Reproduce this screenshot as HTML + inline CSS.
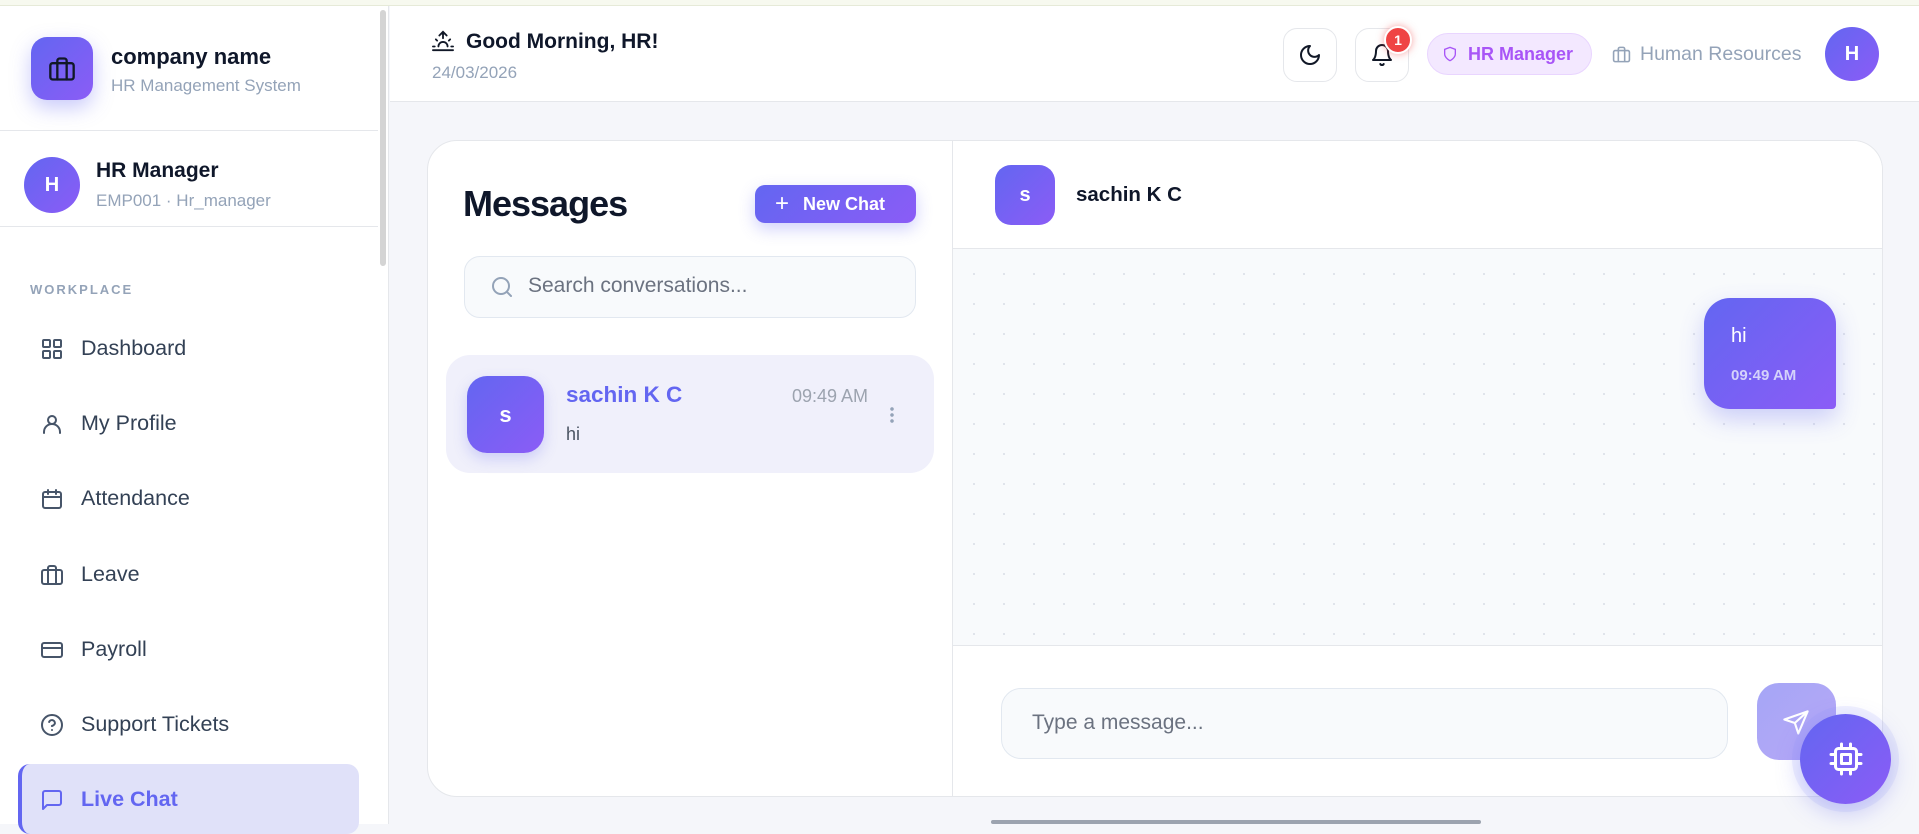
<!DOCTYPE html>
<html><head><meta charset="utf-8"><style>
*{box-sizing:border-box;margin:0;padding:0}
body{width:1919px;height:824px;overflow:hidden;font-family:"Liberation Sans",sans-serif;background:#f5f6fa;position:relative}
.abs{position:absolute}
.topline{left:0;top:0;width:1919px;height:6px;background:#f7f9ef;border-bottom:1px solid #e6ead8}
.side{left:0;top:6px;width:389px;height:818px;background:#fff;border-right:1px solid #e5e7eb}
.grad{background:linear-gradient(135deg,#6366f1,#8b5cf6)}
.nav{position:absolute;left:40px;font-size:21.5px;color:#334155;display:flex;align-items:center}
.nav svg{width:24px;height:24px;margin-right:17px;stroke:#475569;fill:none;stroke-width:2;stroke-linecap:round;stroke-linejoin:round}
.hdr{left:390px;top:6px;width:1529px;height:96px;background:#fff;border-bottom:1px solid #e5e7eb}
.ib{position:absolute;width:54px;height:54px;border:1px solid #e5e7eb;border-radius:14px;background:#fff;display:flex;align-items:center;justify-content:center}
.card{left:427px;top:140px;width:1456px;height:657px;background:#fff;border:1px solid #e5e7eb;border-radius:30px;overflow:hidden}
</style></head><body>
<div class="abs topline"></div>
<div class="abs side">
  <div class="abs grad" style="left:31px;top:31px;width:62px;height:63px;border-radius:16px;box-shadow:0 8px 20px rgba(99,102,241,.35);display:flex;align-items:center;justify-content:center">
    <svg width="28" height="28" viewBox="0 0 24 24" fill="none" stroke="#111827" stroke-width="2" stroke-linecap="round" stroke-linejoin="round"><rect x="2" y="7" width="20" height="14" rx="2"/><path d="M16 21V5a2 2 0 0 0-2-2h-4a2 2 0 0 0-2 2v16"/></svg>
  </div>
  <div class="abs" style="left:111px;top:38px;font-size:22px;font-weight:bold;color:#0f172a">company name</div>
  <div class="abs" style="left:111px;top:70px;font-size:17px;color:#94a3b8">HR Management System</div>
  <div class="abs" style="left:0;top:124px;width:378px;border-top:1px solid #e5e7eb"></div>
  <div class="abs grad" style="left:24px;top:151px;width:56px;height:56px;border-radius:50%;color:#fff;font-weight:bold;font-size:20px;display:flex;align-items:center;justify-content:center">H</div>
  <div class="abs" style="left:96px;top:153px;font-size:21px;font-weight:bold;color:#0f172a">HR Manager</div>
  <div class="abs" style="left:96px;top:185px;font-size:17px;color:#94a3b8">EMP001 · Hr_manager</div>
  <div class="abs" style="left:0;top:220px;width:378px;border-top:1px solid #e5e7eb"></div>
  <div class="abs" style="left:380px;top:4px;width:6px;height:256px;background:#d4d4d4;border-radius:3px"></div>
  <div class="abs" style="left:30px;top:276px;font-size:13px;font-weight:bold;color:#94a3b8;letter-spacing:2px">WORKPLACE</div>
  <div class="nav" style="top:330px"><svg viewBox="0 0 24 24"><rect x="3" y="3" width="7" height="7" rx="1"/><rect x="14" y="3" width="7" height="7" rx="1"/><rect x="3" y="14" width="7" height="7" rx="1"/><rect x="14" y="14" width="7" height="7" rx="1"/></svg>Dashboard</div>
  <div class="nav" style="top:405px"><svg viewBox="0 0 24 24"><circle cx="12" cy="8" r="4"/><path d="M4 21v-1a7 7 0 0 1 16 0v1"/></svg>My Profile</div>
  <div class="nav" style="top:480px"><svg viewBox="0 0 24 24"><rect x="3" y="5" width="18" height="16" rx="2"/><path d="M8 3v4M16 3v4M3 10h18"/></svg>Attendance</div>
  <div class="nav" style="top:556px"><svg viewBox="0 0 24 24"><rect x="2" y="7" width="20" height="14" rx="2"/><path d="M16 21V5a2 2 0 0 0-2-2h-4a2 2 0 0 0-2 2v16"/></svg>Leave</div>
  <div class="nav" style="top:631px"><svg viewBox="0 0 24 24"><rect x="2" y="5" width="20" height="14" rx="2"/><path d="M2 10h20"/></svg>Payroll</div>
  <div class="nav" style="top:706px"><svg viewBox="0 0 24 24"><circle cx="12" cy="12" r="10"/><path d="M9.1 9a3 3 0 0 1 5.8 1c0 2-3 3-3 3M12 17h.01"/></svg>Support Tickets</div>
  <div class="abs" style="left:18px;top:758px;width:341px;height:70px;background:#e0e1f9;border-radius:12px;border-left:4px solid #6366f1"></div>
  <div class="nav" style="top:781px;color:#6366f1;font-weight:bold"><svg viewBox="0 0 24 24" style="stroke:#6366f1"><path d="M21 15a2 2 0 0 1-2 2H7l-4 4V5a2 2 0 0 1 2-2h14a2 2 0 0 1 2 2z"/></svg>Live Chat</div>
</div>
<div class="abs hdr">
  <svg class="abs" style="left:42px;top:24px" width="22" height="22" viewBox="0 0 24 24" fill="none" stroke="#111827" stroke-width="2" stroke-linecap="round"><path d="M17 18a5 5 0 0 0-10 0M12 2v7M4.2 10.2l1.4 1.4M1 18h2M21 18h2M18.4 11.6l1.4-1.4M23 22H1M8 6l4-4 4 4"/></svg>
  <div class="abs" style="left:76px;top:24px;font-size:21px;font-weight:bold;color:#0f172a">Good Morning, HR!</div>
  <div class="abs" style="left:42px;top:57px;font-size:17px;color:#94a3b8">24/03/2026</div>
  <div class="ib" style="left:893px;top:22px"><svg width="24" height="24" viewBox="0 0 24 24" fill="none" stroke="#111827" stroke-width="2" stroke-linecap="round" stroke-linejoin="round"><path d="M12 3a6 6 0 0 0 9 9 9 9 0 1 1-9-9z"/></svg></div>
  <div class="ib" style="left:965px;top:22px"><svg width="24" height="24" viewBox="0 0 24 24" fill="none" stroke="#111827" stroke-width="2" stroke-linecap="round" stroke-linejoin="round"><path d="M6 8a6 6 0 0 1 12 0c0 7 3 9 3 9H3s3-2 3-9M10.3 21a1.9 1.9 0 0 0 3.4 0"/></svg></div>
  <div class="abs" style="left:994px;top:20px;width:28px;height:28px;border-radius:50%;background:#ef4444;border:2px solid #fff;color:#fff;font-size:14px;font-weight:bold;display:flex;align-items:center;justify-content:center;box-shadow:0 0 8px rgba(239,68,68,.5)">1</div>
  <div class="abs" style="left:1037px;top:27px;width:165px;height:42px;border-radius:21px;background:#f3e8ff;border:1px solid #e9d5ff;color:#a855f7;font-size:18px;font-weight:bold;display:flex;align-items:center;padding-left:14px"><svg width="16" height="18" viewBox="0 0 24 24" fill="none" stroke="#a855f7" stroke-width="2" style="margin-right:10px"><path d="M12 22s8-4 8-10V5l-8-3-8 3v7c0 6 8 10 8 10z"/></svg>HR Manager</div>
  <svg class="abs" style="left:1222px;top:39px" width="19" height="19" viewBox="0 0 24 24" fill="none" stroke="#94a3b8" stroke-width="2"><rect x="2" y="7" width="20" height="14" rx="2"/><path d="M16 21V5a2 2 0 0 0-2-2h-4a2 2 0 0 0-2 2v16"/></svg>
  <div class="abs" style="left:1250px;top:37px;font-size:19.5px;color:#94a3b8">Human Resources</div>
  <div class="abs grad" style="left:1435px;top:21px;width:54px;height:54px;border-radius:50%;color:#fff;font-weight:bold;font-size:20px;display:flex;align-items:center;justify-content:center">H</div>
</div>
<div class="abs card">
  <div class="abs" style="left:35px;top:42px;font-size:36px;font-weight:bold;color:#0f172a;letter-spacing:-1px">Messages</div>
  <div class="abs grad" style="left:327px;top:44px;width:161px;height:38px;border-radius:10px;color:#fff;font-size:18px;font-weight:bold;display:flex;align-items:center;padding-left:20px;box-shadow:0 6px 16px rgba(99,102,241,.3)"><span style="font-weight:normal;font-size:24px;margin-right:14px;line-height:1">+</span>New Chat</div>
  <div class="abs" style="left:36px;top:115px;width:452px;height:62px;border-radius:16px;background:#f8fafc;border:1px solid #e2e8f0"></div>
  <svg class="abs" style="left:62px;top:134px" width="24" height="24" viewBox="0 0 24 24" fill="none" stroke="#94a3b8" stroke-width="2" stroke-linecap="round"><circle cx="11" cy="11" r="8"/><path d="M21 21l-4.3-4.3"/></svg>
  <div class="abs" style="left:100px;top:133px;font-size:21px;color:#6b7280">Search conversations...</div>
  <div class="abs" style="left:18px;top:214px;width:488px;height:118px;border-radius:24px;background:#f0f0fb"></div>
  <div class="abs grad" style="left:39px;top:235px;width:77px;height:77px;border-radius:20px;color:#fff;font-size:22px;font-weight:bold;display:flex;align-items:center;justify-content:center;box-shadow:0 6px 14px rgba(99,102,241,.25)">s</div>
  <div class="abs" style="left:138px;top:241px;font-size:22.5px;font-weight:bold;color:#6366f1">sachin K C</div>
  <div class="abs" style="left:364px;top:245px;font-size:18px;color:#9ca3af">09:49 AM</div>
  <div class="abs" style="left:138px;top:283px;font-size:18px;color:#4b5563">hi</div>
  <div class="abs" style="left:462px;top:265px;width:4px;height:18px;background:radial-gradient(circle,#94a3b8 1.6px,transparent 2px) 0 0/4px 6px"></div>
  <div class="abs" style="left:524px;top:0;width:1px;height:657px;background:#e5e7eb"></div>
  <div class="abs" style="left:525px;top:0;width:931px;height:108px;border-bottom:1px solid #e5e7eb;background:#fff"></div>
  <div class="abs grad" style="left:567px;top:24px;width:60px;height:60px;border-radius:16px;color:#fff;font-size:20px;font-weight:bold;display:flex;align-items:center;justify-content:center">s</div>
  <div class="abs" style="left:648px;top:42px;font-size:20.5px;font-weight:bold;color:#0f172a">sachin K C</div>
  <div class="abs" style="left:525px;top:108px;width:931px;height:397px;background-color:#f8fafc;background-image:radial-gradient(circle,#dfe3ea 1px,transparent 1.3px);background-size:30px 30px;background-position:6px 10px;border-bottom:1px solid #e5e7eb"></div>
  <div class="abs grad" style="left:1276px;top:157px;width:132px;height:111px;border-radius:26px 26px 4px 26px;box-shadow:0 10px 24px rgba(99,102,241,.3)"></div>
  <div class="abs" style="left:1303px;top:184px;font-size:20px;color:#fff">hi</div>
  <div class="abs" style="left:1303px;top:226px;font-size:15px;font-weight:bold;color:#d4d2fb">09:49 AM</div>
  <div class="abs" style="left:573px;top:547px;width:727px;height:71px;border-radius:20px;background:#f8fafc;border:1px solid #e2e8f0"></div>
  <div class="abs" style="left:604px;top:570px;font-size:21px;color:#6b7280">Type a message...</div>
  <div class="abs" style="left:1329px;top:542px;width:79px;height:77px;border-radius:22px;background:linear-gradient(135deg,#a5a6f6,#b8a8f7)"></div>
  <svg class="abs" style="left:1354px;top:568px" width="28" height="28" viewBox="0 0 24 24" fill="none" stroke="#fff" stroke-width="1.8" stroke-linejoin="round"><path d="M22 2L2 9l9 3 3 9z"/><path d="M22 2L11 12"/></svg>
</div>
<div class="abs grad" style="left:1800px;top:714px;width:91px;height:90px;border-radius:50%;box-shadow:0 0 0 8px rgba(129,140,248,.12),0 8px 24px rgba(99,102,241,.35);display:flex;align-items:center;justify-content:center">
  <svg width="36" height="36" viewBox="0 0 24 24" fill="none" stroke="#fff" stroke-width="2" stroke-linecap="round" stroke-linejoin="round"><rect x="5" y="5" width="14" height="14" rx="2"/><rect x="9" y="9" width="6" height="6"/><path d="M9 2v3M15 2v3M9 19v3M15 19v3M2 9h3M2 15h3M19 9h3M19 15h3"/></svg>
</div>
<div class="abs" style="left:991px;top:820px;width:490px;height:4px;background:#9ca3af;border-radius:2px"></div>
</body></html>
